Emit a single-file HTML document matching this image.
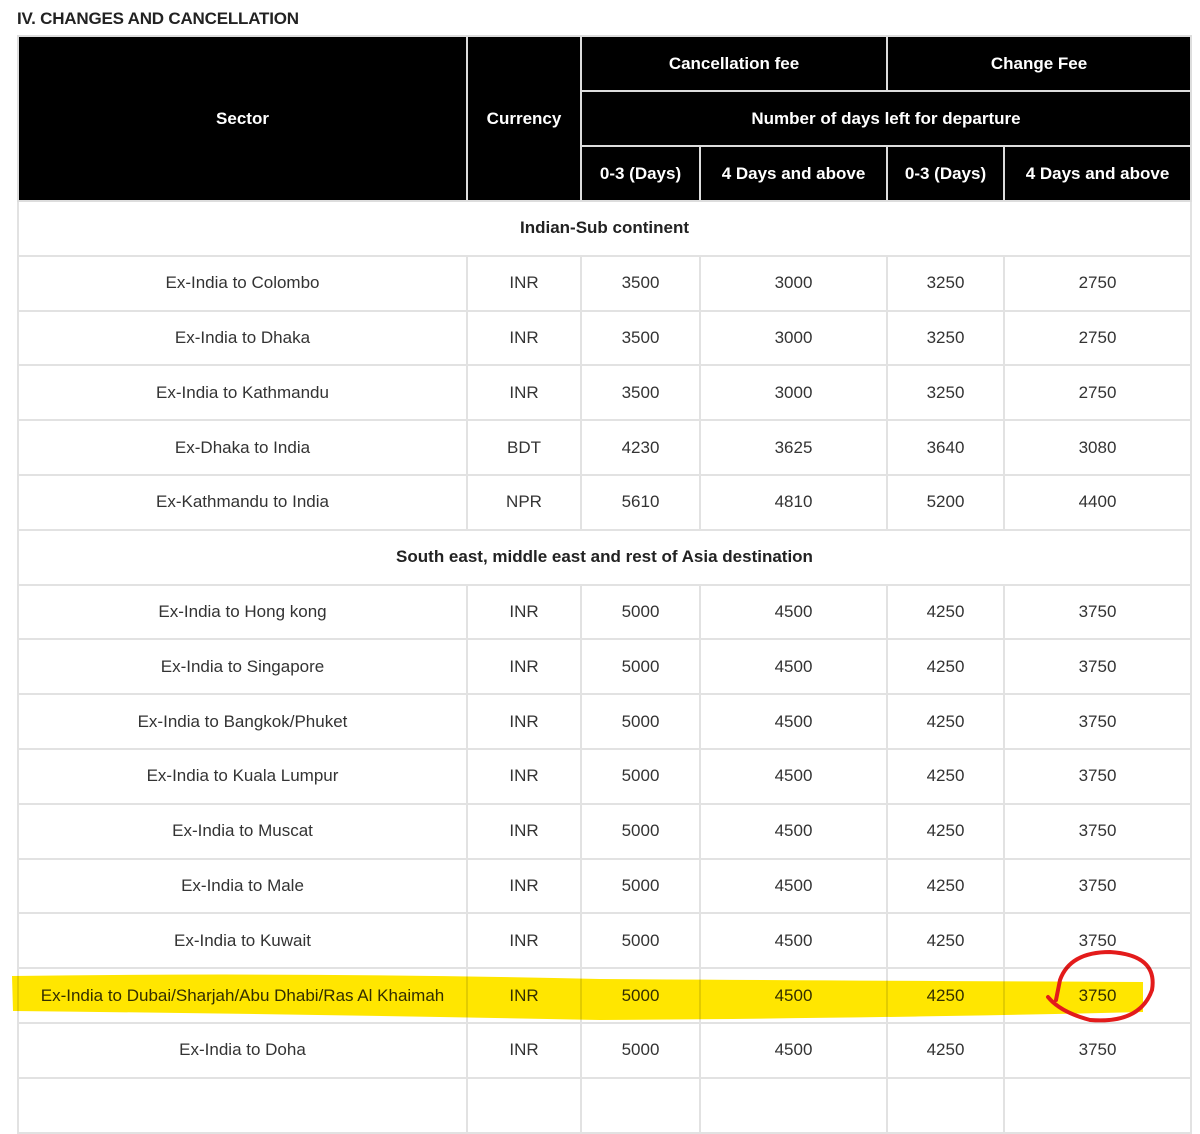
<!DOCTYPE html>
<html><head><meta charset="utf-8"><style>
body{margin:0;width:1200px;height:1084px;background:#fff;overflow:hidden;font-family:"Liberation Sans",sans-serif;position:relative}
h2{position:absolute;left:17px;top:9px;margin:0;font-size:17px;font-weight:bold;color:#222;letter-spacing:-0.2px}
table{position:absolute;left:17px;top:35px;border-collapse:collapse;table-layout:fixed;width:1173px}
td,th{text-align:center;font-size:17px;color:#333;padding:0;border:2px solid #e2e2e2}
th{background:#000;color:#fff;border-color:#ddd;font-weight:bold;height:53px}
tbody td{height:52.8px}
tbody td.g{font-weight:bold;color:#222}
</style></head><body>
<h2>IV. CHANGES AND CANCELLATION</h2>
<table>
<colgroup><col style="width:449px"><col style="width:114px"><col style="width:119px"><col style="width:187px"><col style="width:117px"><col style="width:187px"></colgroup>
<thead>
<tr><th rowspan="3">Sector</th><th rowspan="3">Currency</th><th colspan="2">Cancellation fee</th><th colspan="2">Change Fee</th></tr>
<tr><th colspan="4">Number of days left for departure</th></tr>
<tr><th>0-3 (Days)</th><th>4 Days and above</th><th>0-3 (Days)</th><th>4 Days and above</th></tr>
</thead>
<tbody>
<tr><td colspan="6" class="g">Indian-Sub continent</td></tr>
<tr><td>Ex-India to Colombo</td><td>INR</td><td>3500</td><td>3000</td><td>3250</td><td>2750</td></tr>
<tr><td>Ex-India to Dhaka</td><td>INR</td><td>3500</td><td>3000</td><td>3250</td><td>2750</td></tr>
<tr><td>Ex-India to Kathmandu</td><td>INR</td><td>3500</td><td>3000</td><td>3250</td><td>2750</td></tr>
<tr><td>Ex-Dhaka to India</td><td>BDT</td><td>4230</td><td>3625</td><td>3640</td><td>3080</td></tr>
<tr><td>Ex-Kathmandu to India</td><td>NPR</td><td>5610</td><td>4810</td><td>5200</td><td>4400</td></tr>
<tr><td colspan="6" class="g">South east, middle east and rest of Asia destination</td></tr>
<tr><td>Ex-India to Hong kong</td><td>INR</td><td>5000</td><td>4500</td><td>4250</td><td>3750</td></tr>
<tr><td>Ex-India to Singapore</td><td>INR</td><td>5000</td><td>4500</td><td>4250</td><td>3750</td></tr>
<tr><td>Ex-India to Bangkok/Phuket</td><td>INR</td><td>5000</td><td>4500</td><td>4250</td><td>3750</td></tr>
<tr><td>Ex-India to Kuala Lumpur</td><td>INR</td><td>5000</td><td>4500</td><td>4250</td><td>3750</td></tr>
<tr><td>Ex-India to Muscat</td><td>INR</td><td>5000</td><td>4500</td><td>4250</td><td>3750</td></tr>
<tr><td>Ex-India to Male</td><td>INR</td><td>5000</td><td>4500</td><td>4250</td><td>3750</td></tr>
<tr><td>Ex-India to Kuwait</td><td>INR</td><td>5000</td><td>4500</td><td>4250</td><td>3750</td></tr>
<tr><td>Ex-India to Dubai/Sharjah/Abu Dhabi/Ras Al Khaimah</td><td>INR</td><td>5000</td><td>4500</td><td>4250</td><td>3750</td></tr>
<tr><td>Ex-India to Doha</td><td>INR</td><td>5000</td><td>4500</td><td>4250</td><td>3750</td></tr>
<tr><td>&nbsp;</td><td></td><td></td><td></td><td></td><td></td></tr>
</tbody>
</table>
<svg width="1200" height="1084" style="position:absolute;left:0;top:0;mix-blend-mode:multiply" viewBox="0 0 1200 1084">
<path d="M12 976 Q300 972 600 979 Q900 981 1143 982 L1143 1012 Q900 1018 600 1020 Q300 1014 13 1011 Z" fill="#ffe600"/>
<path d="M1048 997 Q1060 1012 1090 1020 Q1140 1024 1152 990 Q1158 955 1110 952 Q1070 952 1060 980 L1056 1000" fill="none" stroke="#e31b1b" stroke-width="4" stroke-linecap="round"/>
</svg>
</body></html>
